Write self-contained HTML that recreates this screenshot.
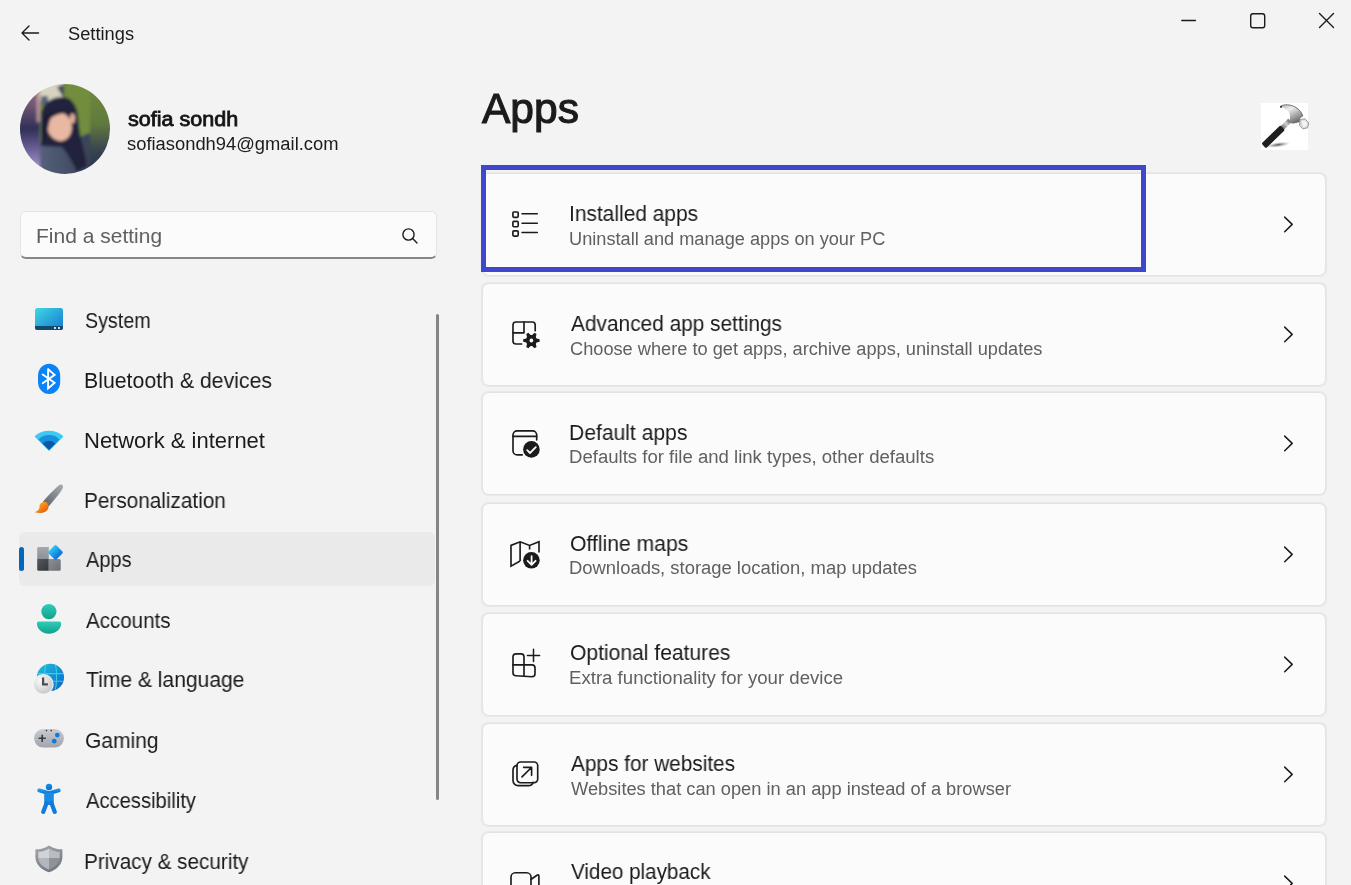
<!DOCTYPE html>
<html><head><meta charset="utf-8">
<style>
html,body{margin:0;padding:0}
body{width:1351px;height:885px;overflow:hidden;background:#f3f3f3;position:relative;font-family:"Liberation Sans",sans-serif;color:#1b1b1b}
.t{position:absolute;white-space:nowrap;transform-origin:0 50%;line-height:1;will-change:transform}
.nav{font-size:21.3px}
.ct{font-size:21.3px}
.cs{font-size:18px;color:#606060}
.card{position:absolute;left:482px;width:842px;height:101px;background:#fbfbfb;border:1px solid #e3e3e3;border-radius:7px;box-shadow:0 0 0.8px 0.5px #e8e8e8}
svg{position:absolute;overflow:visible}
</style></head><body>

<!-- header -->
<svg style="left:0;top:0" width="1351" height="60">
  <g fill="none" stroke="#1b1b1b" stroke-width="1.4" stroke-linecap="round" stroke-linejoin="round">
    <path d="M22 33H38.5M22 33L29 26M22 33L29 40"/>
    <path d="M1181.8 20.5H1195.4"/>
    <rect x="1250.7" y="13.7" width="14" height="14" rx="2.2"/>
    <path d="M1319.5 13.5L1333.5 27.5M1333.5 13.5L1319.5 27.5"/>
  </g>
</svg>
<div class="t" style="left:68.4px;top:24.8px;font-size:18px;transform:scaleX(1.015)">Settings</div>

<!-- avatar -->
<svg style="left:20px;top:84px" width="90" height="90" viewBox="0 0 90 90">
  <defs>
    <clipPath id="cc"><circle cx="45" cy="45" r="45"/></clipPath>
    <linearGradient id="lp" x1="0" y1="0" x2="0" y2="1"><stop offset="0" stop-color="#a07c80"/><stop offset="0.28" stop-color="#6a5470"/><stop offset="0.5" stop-color="#2f2e58"/><stop offset="0.75" stop-color="#7a6ca6"/><stop offset="1" stop-color="#c4b8de"/></linearGradient>
    <linearGradient id="rg" x1="0" y1="0" x2="0" y2="1"><stop offset="0" stop-color="#718c40"/><stop offset="0.45" stop-color="#60793c"/><stop offset="0.7" stop-color="#3a4650"/><stop offset="1" stop-color="#20284c"/></linearGradient>
    <linearGradient id="bd" x1="0" y1="0" x2="1" y2="0"><stop offset="0" stop-color="#55607a"/><stop offset="1" stop-color="#3a4258"/></linearGradient>
    <filter id="bl" x="-10%" y="-10%" width="120%" height="120%"><feGaussianBlur stdDeviation="1.5"/></filter>
  </defs>
  <g clip-path="url(#cc)">
    <g filter="url(#bl)">
    <rect x="-5" y="-5" width="100" height="100" fill="#6e8a3a"/>
    <rect x="-5" y="-5" width="25" height="100" fill="url(#lp)"/>
    <rect x="16.5" y="8" width="3.5" height="30" fill="#d8a8a8" opacity="0.7"/>
    <rect x="20" y="-5" width="25" height="22" fill="#d6d3c0"/>
    <rect x="21" y="12" width="7" height="9" fill="#566478"/>
    <path d="M37 3L51 -3L57 7L43 13Z" fill="#3a4856"/>
    <rect x="44" y="-5" width="26" height="65" fill="#728d3c"/>
    <rect x="70" y="-5" width="25" height="100" fill="url(#rg)"/>
    <path d="M20 58C26 54 34 55 40 61L46 65C52 59 60 51 70 49V95H20Z" fill="url(#bd)"/>
    <path d="M21 30C23 18 33 12.5 43 13C52 13.5 57 22 58 32C59 42 59.5 50 62 58C64 66 66 74 67 82L57 88C52 78 48 70 42 63L21 62Z" fill="#23223e"/>
    <ellipse cx="39.5" cy="42.5" rx="12.2" ry="14.5" transform="rotate(-12 39.5 42.5)" fill="#e9b8a2"/>
    <ellipse cx="52.5" cy="34.5" rx="2.6" ry="5" fill="#dcae98"/>
    <path d="M21 42C23 32 28 28 35 26.5C31 32 28 40 27.5 50L22 62Z" fill="#1e1d38"/>
    <path d="M29 31C33 26 42 25 51 27C47 29 38 29 31 34Z" fill="#1e1d38"/>
    </g>
  </g>
</svg>
<div class="t" style="left:128.0px;top:108.5px;font-size:20px;font-weight:400;-webkit-text-stroke:0.8px #141414;color:#141414;transform:scaleX(1.077)">sofia sondh</div>
<div class="t" style="left:127.0px;top:134.8px;font-size:18px;transform:scaleX(1.020)">sofiasondh94@gmail.com</div>

<!-- search -->
<div style="position:absolute;left:20px;top:211px;width:415px;height:45px;background:#fbfbfb;border:1px solid #e5e5e5;border-bottom:2px solid #868686;border-radius:6px"></div>
<div class="t" style="left:35.8px;top:225.2px;font-size:21px;color:#5d5d5d;transform:scaleX(0.999)">Find a setting</div>
<svg style="left:0;top:0" width="1" height="1">
  <g fill="none" stroke="#1b1b1b" stroke-width="1.4" stroke-linecap="round">
    <circle cx="408.5" cy="234.5" r="5.6"/>
    <path d="M412.6 238.6L417 243"/>
  </g>
</svg>

<!-- nav selection -->
<div style="position:absolute;left:19px;top:532px;width:416px;height:54px;background:#eaeaea;border-radius:6px"></div>
<div style="position:absolute;left:19px;top:547px;width:5px;height:24px;background:#0067c0;border-radius:3px"></div>
<!-- scrollbar -->
<div style="position:absolute;left:435.5px;top:313.5px;width:3px;height:486px;background:#868686;border-radius:2px"></div>

<!-- nav text -->
<div class="t nav" style="left:85.2px;top:311.2px;transform:scaleX(0.924)">System</div>
<div class="t nav" style="left:84.0px;top:371.0px;transform:scaleX(0.999)">Bluetooth &amp; devices</div>
<div class="t nav" style="left:84.0px;top:431.0px;transform:scaleX(1.033)">Network &amp; internet</div>
<div class="t nav" style="left:84.0px;top:491.0px;transform:scaleX(0.974)">Personalization</div>
<div class="t nav" style="left:86.0px;top:550.0px;transform:scaleX(0.938)">Apps</div>
<div class="t nav" style="left:85.8px;top:610.6px;transform:scaleX(0.965)">Accounts</div>
<div class="t nav" style="left:86.0px;top:670.0px;transform:scaleX(0.989)">Time &amp; language</div>
<div class="t nav" style="left:84.8px;top:730.5px;transform:scaleX(0.985)">Gaming</div>
<div class="t nav" style="left:86.0px;top:791.0px;transform:scaleX(0.948)">Accessibility</div>
<div class="t nav" style="left:84.0px;top:851.5px;transform:scaleX(0.972)">Privacy &amp; security</div>

<svg style="left:0;top:0" width="1" height="1">
  <defs>
    <linearGradient id="gSys" x1="0" y1="0" x2="1" y2="1"><stop offset="0" stop-color="#3fd9e3"/><stop offset="1" stop-color="#1577d0"/></linearGradient>
    <clipPath id="cSys"><rect x="35" y="308" width="28" height="22" rx="2.5"/></clipPath>
    <linearGradient id="gBrH" x1="1" y1="0" x2="0" y2="1"><stop offset="0" stop-color="#a9aeb4"/><stop offset="1" stop-color="#5a6068"/></linearGradient>
    <linearGradient id="gBrT" x1="0" y1="0" x2="1" y2="1"><stop offset="0" stop-color="#ffc21c"/><stop offset="1" stop-color="#e24c0e"/></linearGradient>
    <linearGradient id="gDia" x1="0" y1="0" x2="1" y2="0"><stop offset="0" stop-color="#2dc4f4"/><stop offset="1" stop-color="#0a6fd6"/></linearGradient>
    <linearGradient id="gTL" x1="0" y1="0" x2="0" y2="1"><stop offset="0" stop-color="#a3a8ae"/><stop offset="1" stop-color="#8c9197"/></linearGradient>
    <linearGradient id="gBL" x1="0" y1="0" x2="1" y2="1"><stop offset="0" stop-color="#55595e"/><stop offset="1" stop-color="#34373b"/></linearGradient>
    <linearGradient id="gBR" x1="0" y1="0" x2="1" y2="1"><stop offset="0" stop-color="#8b9096"/><stop offset="1" stop-color="#6a6f75"/></linearGradient>
    <linearGradient id="gAcc" x1="0" y1="0" x2="0" y2="1"><stop offset="0" stop-color="#2fcdb8"/><stop offset="1" stop-color="#12a08c"/></linearGradient>
    <linearGradient id="gGlobe" x1="0" y1="0" x2="1" y2="1"><stop offset="0" stop-color="#22c3dc"/><stop offset="1" stop-color="#0c62c8"/></linearGradient>
    <radialGradient id="gClock" cx="0.35" cy="0.3" r="0.8"><stop offset="0" stop-color="#fafafa"/><stop offset="1" stop-color="#c4c4c6"/></radialGradient>
    <linearGradient id="gPad" x1="0" y1="0" x2="0" y2="1"><stop offset="0" stop-color="#c8ccd1"/><stop offset="1" stop-color="#a0a5ab"/></linearGradient>
    <linearGradient id="gFig" x1="0" y1="0" x2="0.3" y2="1"><stop offset="0" stop-color="#1f95e6"/><stop offset="1" stop-color="#0a71d6"/></linearGradient>
    <linearGradient id="gSh" x1="0" y1="0" x2="0.4" y2="1"><stop offset="0" stop-color="#a2a7ad"/><stop offset="1" stop-color="#747a81"/></linearGradient>
    <clipPath id="cSh"><path d="M49 848.4C45.6 850.7 41.8 851.7 38.3 851.8V857.6C38.3 863 42.5 867.2 49 869.5C55.5 867.2 59.7 863 59.7 857.6V851.8C56.2 851.7 52.4 850.7 49 848.4Z"/></clipPath>
  </defs>
  <!-- system -->
  <g clip-path="url(#cSys)">
    <rect x="35" y="308" width="28" height="22" fill="url(#gSys)"/>
    <rect x="35" y="326" width="28" height="4" fill="#114a70"/>
    <rect x="54" y="327" width="2" height="2" fill="#c9dde8"/>
    <rect x="58" y="327" width="2" height="2" fill="#c9dde8"/>
  </g>
  <!-- bluetooth -->
  <rect x="38" y="363.8" width="22.2" height="30.1" rx="11" ry="12" fill="#0a83f7"/>
  <path d="M48.1 369.3V388.5L54.6 382.8L42.7 374.5M42.7 383.3L54.6 374.9L48.1 369.3" fill="none" stroke="#fff" stroke-width="1.9" stroke-linejoin="miter" stroke-linecap="round"/>
  <!-- network -->
  <path d="M35.6 436.4A21.2 21.2 0 0 1 62.4 436.4L49 450Z" fill="#3ccaf3" stroke="#3ccaf3" stroke-width="1.6" stroke-linejoin="round"/>
  <path d="M38.4 439.4A15.1 15.1 0 0 1 59.6 439.4L49 450Z" fill="#1890e0"/>
  <path d="M42.5 443.5A9.2 9.2 0 0 1 55.5 443.5L49 450Z" fill="#0d58a6"/>
  <!-- personalization -->
  <path d="M58.6 485.6C60.4 483.7 63.6 484.5 63 487.4C61.8 491 54 500.3 48.5 506.5L42.8 502C48 495.5 55.8 488.4 58.6 485.6Z" fill="url(#gBrH)"/>
  <path d="M43.2 502C46.5 501.2 49.4 504.3 48.3 508.3C47.2 512.2 41.2 514.2 34.8 512.3C38.2 510.8 39.5 509.3 39.5 506.6C39.5 504.2 40.8 502.6 43.2 502Z" fill="url(#gBrT)"/>
  <!-- apps -->
  <path d="M38.7 547H48.8V559H37.2V548.5A1.5 1.5 0 0 1 38.7 547Z" fill="url(#gTL)"/>
  <path d="M37.2 559H48.8V570.7H38.7A1.5 1.5 0 0 1 37.2 569.2Z" fill="url(#gBL)"/>
  <path d="M48.8 559H59.2A1.5 1.5 0 0 1 60.7 560.5V569.2A1.5 1.5 0 0 1 59.2 570.7H48.8Z" fill="url(#gBR)"/>
  <rect x="49.9" y="546.8" width="11.2" height="11.2" rx="1.8" transform="rotate(45 55.5 552.4)" fill="url(#gDia)"/>
  <!-- accounts -->
  <circle cx="48.9" cy="611.6" r="7.6" fill="url(#gAcc)"/>
  <path d="M38.8 621.6H59.2A2 2 0 0 1 61.2 623.6C61.2 629.5 55.5 633.8 49 633.8C42.5 633.8 36.9 629.5 36.9 623.6A2 2 0 0 1 38.8 621.6Z" fill="url(#gAcc)"/>
  <!-- time -->
  <circle cx="50.4" cy="677.4" r="13.6" fill="url(#gGlobe)"/>
  <clipPath id="cGl"><circle cx="50.4" cy="677.4" r="13.6"/></clipPath><g fill="none" stroke="#40d6ee" stroke-width="1.1" opacity="0.85" clip-path="url(#cGl)">
    <path d="M37 673.6H63.8M37.5 681.2H63.5"/>
    <path d="M46 664.2C44 670 44 684 46.5 690.8M55.2 664.2C57 670 57 684 55 690.8"/>
  </g>
  <circle cx="43.3" cy="684.4" r="10.4" fill="#f3f3f3"/>
  <circle cx="43.3" cy="684.4" r="9.3" fill="url(#gClock)"/>
  <path d="M43.1 677.4V684.4H47.9" fill="none" stroke="#4d4d4f" stroke-width="2.3"/>
  <!-- gaming -->
  <rect x="34.1" y="729" width="29.8" height="18.6" rx="9.3" fill="url(#gPad)"/>
  <path d="M38.6 738.3H45.8M42.2 734.7V741.9" stroke="#3a3b3d" stroke-width="1.6"/>
  <circle cx="57.3" cy="735.1" r="2.4" fill="#1677e0"/>
  <circle cx="54.2" cy="741.2" r="2.4" fill="#1677e0"/>
  <circle cx="46.5" cy="730.6" r="0.8" fill="#333"/>
  <circle cx="51.2" cy="730.6" r="0.8" fill="#333"/>
  <!-- accessibility -->
  <circle cx="49" cy="787" r="3.2" fill="url(#gFig)"/>
  <path d="M39.2 790.4L49 793.2L58.8 790.4" fill="none" stroke="url(#gFig)" stroke-width="3.8" stroke-linecap="round" stroke-linejoin="round"/>
  <path d="M44.2 792.5H53.8V805H44.2Z" fill="#1a8ae3"/>
  <path d="M46.6 803L43.2 811.9M51.4 803L54.8 811.9" fill="none" stroke="#0f7bdb" stroke-width="4.2" stroke-linecap="round"/>
  <!-- privacy -->
  <path d="M49 845.4C45 848.3 40.3 849.3 35.4 849.3V857C35.4 864.2 41 869.5 49 872.3C57 869.5 62.4 864.2 62.4 857V849.3C57.7 849.3 53 848.3 49 845.4Z" fill="url(#gSh)"/>
  <g clip-path="url(#cSh)">
    <rect x="38" y="848" width="11" height="10" fill="#d0d3d8"/>
    <rect x="49" y="848" width="11" height="10" fill="#b9bdc3"/>
    <rect x="38" y="858" width="11" height="12" fill="#b3b7bd"/>
    <rect x="49" y="858" width="11" height="12" fill="#8e939a"/>
  </g>
</svg>

<!-- title -->
<div class="t" style="left:482.4px;top:87.9px;font-size:42px;font-weight:400;-webkit-text-stroke:1.1px #1b1b1b;transform:scaleX(1.012)">Apps</div>

<svg style="left:0;top:0" width="1" height="1">
  <defs>
    <linearGradient id="gHd" x1="0" y1="0" x2="0.6" y2="1"><stop offset="0" stop-color="#b0b0b0"/><stop offset="0.35" stop-color="#eeeeee"/><stop offset="0.7" stop-color="#a8a8a8"/><stop offset="1" stop-color="#6a6a6a"/></linearGradient>
    <linearGradient id="gNk" x1="0" y1="0" x2="1" y2="0"><stop offset="0" stop-color="#7a7a7a"/><stop offset="0.5" stop-color="#d0d0d0"/><stop offset="1" stop-color="#6a6a6a"/></linearGradient>
    <radialGradient id="gShd" cx="0.5" cy="0.5" r="0.5"><stop offset="0" stop-color="#444" stop-opacity="0.9"/><stop offset="1" stop-color="#888" stop-opacity="0"/></radialGradient>
  </defs>
  <rect x="1261" y="103" width="47" height="47" fill="#ffffff"/>
  <ellipse cx="1278" cy="144.8" rx="12" ry="2.6" transform="rotate(-8 1278 144.8)" fill="url(#gShd)"/>
  <rect x="1281.3" y="121.6" width="10" height="4.8" transform="rotate(-45 1286.3 124)" fill="url(#gNk)"/>
  <path d="M1280.2 106.8C1283 104.3 1290 104 1296 107.5C1299.5 109.7 1302 113 1302.8 116.2L1300 118.5L1300.5 121.5C1297 123 1294 123.5 1291.8 123.5L1289.2 120.8C1290.6 117.5 1290.4 113.5 1288 111C1286 109 1283 107.8 1280.2 106.8Z" fill="url(#gHd)"/>
  <path d="M1281 106.2C1284 104.3 1290 104 1296 107.5C1299.5 109.7 1302 113 1302.8 116.2" fill="none" stroke="#5a5a5a" stroke-width="0.9"/>
  <circle cx="1281" cy="106.8" r="1.1" fill="#333"/>
  <path d="M1300 119.5L1305 118.8L1308.8 123L1307.5 127.8L1303 129L1299.5 125.5Z" fill="#d8d8d8" stroke="#8a8a8a" stroke-width="0.8"/>
  <path d="M1301.5 121L1305 120.5L1307.2 123.3L1306.2 126.5L1303.2 127.2Z" fill="#f4f4f4"/>
  <rect x="1260" y="133.5" width="26.5" height="6.6" rx="1.6" transform="rotate(-44 1273.2 136.8)" fill="#1f1f1f"/>
</svg>

<!-- cards -->
<div class="card" style="top:173px"></div>
<div class="card" style="top:283px"></div>
<div class="card" style="top:392px"></div>
<div class="card" style="top:503px"></div>
<div class="card" style="top:613px"></div>
<div class="card" style="top:723px"></div>
<div class="card" style="top:832px"></div>

<div class="t ct" style="left:569.0px;top:204.0px;transform:scaleX(0.982)">Installed apps</div>
<div class="t cs" style="left:569.0px;top:229.8px;transform:scaleX(1.010)">Uninstall and manage apps on your PC</div>
<div class="t ct" style="left:570.6px;top:313.5px;transform:scaleX(0.979)">Advanced app settings</div>
<div class="t cs" style="left:569.6px;top:339.8px;transform:scaleX(1.011)">Choose where to get apps, archive apps, uninstall updates</div>
<div class="t ct" style="left:569.0px;top:423.0px;transform:scaleX(0.990)">Default apps</div>
<div class="t cs" style="left:569.0px;top:448.3px;transform:scaleX(1.031)">Defaults for file and link types, other defaults</div>
<div class="t ct" style="left:570.0px;top:533.5px;transform:scaleX(0.993)">Offline maps</div>
<div class="t cs" style="left:569.0px;top:558.8px;transform:scaleX(1.023)">Downloads, storage location, map updates</div>
<div class="t ct" style="left:570.0px;top:643.0px;transform:scaleX(0.989)">Optional features</div>
<div class="t cs" style="left:569.0px;top:668.8px;transform:scaleX(1.034)">Extra functionality for your device</div>
<div class="t ct" style="left:571.0px;top:753.5px;transform:scaleX(0.976)">Apps for websites</div>
<div class="t cs" style="left:571.0px;top:779.8px;transform:scaleX(1.014)">Websites that can open in an app instead of a browser</div>
<div class="t ct" style="left:570.8px;top:862.0px;transform:scaleX(0.968)">Video playback</div>

<svg style="left:0;top:0" width="1" height="1">
  <g fill="none" stroke="#1b1b1b" stroke-width="1.65" stroke-linecap="round" stroke-linejoin="round">
    <!-- installed -->
    <rect x="512.9" y="212" width="5.3" height="5.3" rx="1"/>
    <rect x="512.9" y="221.4" width="5.3" height="5.3" rx="1"/>
    <rect x="512.9" y="230.8" width="5.3" height="5.3" rx="1"/>
    <path d="M522 213.8H537.3M522 223.2H537.3M522 232.5H537.3" stroke-width="1.5"/>
    <!-- advanced -->
    <path d="M521.7 344H516a3 3 0 0 1-3-3V325a3 3 0 0 1 3-3h16.2a3 3 0 0 1 3 3v5.8"/>
    <path d="M513 332.9H524V322"/>
    <!-- default -->
    <path d="M522.2 454.9H517.2a4.2 4.2 0 0 1-4.2-4.2V435a4.2 4.2 0 0 1 4.2-4.2h15.3a4.2 4.2 0 0 1 4.2 4.2v5"/>
    <path d="M513 436.3H536.7"/>
    <!-- maps -->
    <path d="M520.1 561L511 566.1V545.4L520.1 541.8L529.6 545.4L539 541.8V552.6M520.1 541.8V561M529.6 545.4V549.6" stroke-linejoin="miter" stroke-linecap="butt"/>
    <!-- optional -->
    <path d="M516 675.7a3 3 0 0 1-3-3V656.8a3 3 0 0 1 3-3H521a3 3 0 0 1 3 3v8.1H532a3 3 0 0 1 3 3v5.8a3 3 0 0 1-3 3Z"/>
    <path d="M513 664.9H524V675.7"/>
    <path d="M527.4 655.5H539.6M533.5 649.3V661.5" stroke-width="1.5"/>
    <!-- websites -->
    <rect x="517" y="762" width="20.7" height="20.7" rx="3.6"/>
    <path d="M516.8 765.4C514.6 765.9 513 767.8 513 770.2V780.6A5 5 0 0 0 518 785.6H528.5C530.7 785.6 532.6 784.2 533.2 782.2"/>
    <path d="M522 776.9L531.4 767.5M523.6 767.3H531.6V775.3"/>
    <!-- video -->
    <path d="M511 900V877a4.3 4.3 0 0 1 4.3-4.3H526.7a4.3 4.3 0 0 1 4.3 4.3V900"/>
    <path d="M531.2 879.2L537 875.3Q538.9 874.2 538.9 876.4V900"/>
  </g>
  <!-- gear -->
  <path fill="#1b1b1b" fill-rule="evenodd" d="M536.59 338.40L539.62 339.34L539.62 341.66L536.59 342.60L535.81 343.95L536.51 347.04L534.51 348.20L532.18 346.05L530.62 346.05L528.29 348.20L526.29 347.04L526.99 343.95L526.21 342.60L523.18 341.66L523.18 339.34L526.21 338.40L526.99 337.05L526.29 333.96L528.29 332.80L530.62 334.95L532.18 334.95L534.51 332.80L536.51 333.96L535.81 337.05ZM533.30 340.5A1.9 1.9 0 1 0 529.50 340.5A1.9 1.9 0 1 0 533.30 340.5Z"/>
  <!-- default check circle -->
  <circle cx="531.4" cy="449.4" r="8.3" fill="#1b1b1b"/>
  <path d="M527.2 450.2L530 453L535.8 447.2" fill="none" stroke="#fbfbfb" stroke-width="1.8" stroke-linecap="round" stroke-linejoin="round"/>
  <!-- maps download circle -->
  <circle cx="531.4" cy="560.3" r="8.3" fill="#1b1b1b"/>
  <path d="M531.6 556.2V564.4M527.6 560.8L531.6 564.8L535.6 560.8" fill="none" stroke="#fbfbfb" stroke-width="1.8" stroke-linecap="round" stroke-linejoin="round"/>
  <!-- chevrons -->
  <g fill="none" stroke="#1b1b1b" stroke-width="1.5" stroke-linecap="round" stroke-linejoin="round">
    <path d="M1284.7 217.1L1292.2 224.4L1284.7 231.7"/>
    <path d="M1284.7 327.1L1292.2 334.4L1284.7 341.7"/>
    <path d="M1284.7 436.1L1292.2 443.4L1284.7 450.7"/>
    <path d="M1284.7 547.1L1292.2 554.4L1284.7 561.7"/>
    <path d="M1284.7 657.1L1292.2 664.4L1284.7 671.7"/>
    <path d="M1284.7 767.1L1292.2 774.4L1284.7 781.7"/>
    <path d="M1284.7 876.1L1292.2 883.4L1284.7 890.7"/>
  </g>
</svg>

<!-- highlight -->
<div style="position:absolute;left:481px;top:165px;width:655px;height:97px;border:5px solid #3f48cc"></div>

</body></html>
